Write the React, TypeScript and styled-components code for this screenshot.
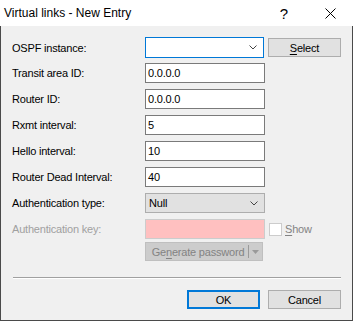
import styled, { createGlobalStyle } from 'styled-components';

const GlobalStyle = createGlobalStyle`
  html, body {
    margin: 0;
    padding: 0;
    background: #f0f0f0;
  }
  body {
    font-family: "Liberation Sans", Arial, sans-serif;
    font-size: 11px;
    letter-spacing: -0.2px;
    color: #000;
  }
`;

const Window = styled.div`
  width: 353px;
  height: 321px;
  box-sizing: border-box;
  border: 1px solid #4a4a4a;
  border-top: none;
  background: #f0f0f0;
  display: flex;
  flex-direction: column;
`;

const TitleBar = styled.div`
  height: 26px;
  flex: none;
  background: #fff;
  display: flex;
  align-items: center;
  margin: 0 -1px;
  padding-left: 4px;
  font-size: 12px;
  letter-spacing: 0;
`;

const TitleText = styled.div`
  flex: 1;
  padding-bottom: 1px;
`;

const TitleButton = styled.div<{ $w: number }>`
  width: ${(p) => p.$w}px;
  height: 26px;
  display: flex;
  align-items: center;
  justify-content: center;
  font-size: 15px;
`;

const Body = styled.div`
  flex: 1;
  display: flex;
  flex-direction: column;
  padding: 11px 11px 0 11px;
`;

const Row = styled.div<{ $h?: number; $mt?: number }>`
  display: flex;
  align-items: center;
  height: ${(p) => p.$h ?? 20}px;
  margin-top: ${(p) => p.$mt ?? 6}px;
  &:first-child {
    margin-top: 0;
  }
`;

const Label = styled.div<{ $disabled?: boolean }>`
  width: 133px;
  flex: none;
  color: ${(p) => (p.$disabled ? '#a0a0a0' : '#000')};
`;

const TextBox = styled.div<{ $bg?: string; $border?: string }>`
  width: 120px;
  height: 100%;
  box-sizing: border-box;
  border: 1px solid ${(p) => p.$border ?? '#7a7a7a'};
  background: ${(p) => p.$bg ?? '#fff'};
  display: flex;
  align-items: center;
  padding-left: 2px;
`;

const Combo = styled.div<{ $focused?: boolean }>`
  width: 120px;
  height: 100%;
  box-sizing: border-box;
  border: 1px solid ${(p) => (p.$focused ? '#0078d7' : '#adadad')};
  background: ${(p) => (p.$focused ? '#fff' : '#e1e1e1')};
  display: flex;
  align-items: center;
  padding: 0 6px 0 3px;
`;

const ComboValue = styled.div`
  flex: 1;
`;

const Button = styled.div<{ $w: number; $h?: number; $default?: boolean; $disabled?: boolean }>`
  width: ${(p) => p.$w}px;
  height: ${(p) => p.$h ?? 19}px;
  box-sizing: border-box;
  border: ${(p) => (p.$default ? '2px solid #0078d7' : `1px solid ${p.$disabled ? '#bfbfbf' : '#adadad'}`)};
  background: ${(p) => (p.$disabled ? '#cccccc' : '#e1e1e1')};
  color: ${(p) => (p.$disabled ? '#838383' : '#000')};
  display: flex;
  align-items: center;
  justify-content: center;
  white-space: nowrap;
  flex: none;
`;

const SplitMain = styled.div`
  flex: 1;
  text-align: center;
  padding-left: 2px;
`;

const SplitDivider = styled.div`
  width: 1px;
  height: 13px;
  background: #9a9a9a;
`;

const SplitArrow = styled.div`
  width: 13px;
  display: flex;
  justify-content: center;
`;

const Checkbox = styled.div`
  width: 13px;
  height: 13px;
  box-sizing: border-box;
  border: 1px solid #cccccc;
  background: #fff;
  margin-left: 4px;
`;

const CheckLabel = styled.div`
  margin-left: 3px;
  color: #838383;
`;

const Spacer = styled.div`
  width: 133px;
  flex: none;
`;

const Gap = styled.div`
  width: 4px;
  flex: none;
`;

const Separator = styled.div`
  margin: 16px 0 0 1px;
  height: 1px;
  background: #a0a0a0;
  border-bottom: 1px solid #fff;
`;

const Footer = styled.div`
  display: flex;
  justify-content: flex-end;
  gap: 8px;
  margin-top: 11px;
`;

const U = styled.span`
  text-decoration: underline;
  text-underline-offset: 2px;
`;

const Chevron = ({ color = '#444' }: { color?: string }) => (
  <svg width="8" height="5" viewBox="0 0 8 5">
    <path d="M0.5 0.5 L4 4 L7.5 0.5" fill="none" stroke={color} strokeWidth="1" />
  </svg>
);

const fields = [
  { label: 'Transit area ID:', value: '0.0.0.0' },
  { label: 'Router ID:', value: '0.0.0.0' },
  { label: 'Rxmt interval:', value: '5' },
  { label: 'Hello interval:', value: '10' },
  { label: 'Router Dead Interval:', value: '40' },
];

export default function App() {
  return (
    <>
      <GlobalStyle />
      <Window>
        <TitleBar>
          <TitleText>Virtual links - New Entry</TitleText>
          <TitleButton $w={46}>?</TitleButton>
          <TitleButton $w={46}>
            <svg width="11" height="11" viewBox="0 0 11 11">
              <path d="M0.5 0.5 L10.5 10.5 M10.5 0.5 L0.5 10.5" stroke="#000" strokeWidth="1" />
            </svg>
          </TitleButton>
        </TitleBar>
        <Body>
          <Row $h={21}>
            <Label>OSPF instance:</Label>
            <Combo $focused>
              <ComboValue />
              <Chevron />
            </Combo>
            <Gap />
            <Button $w={73}>
              <span>
                <U>S</U>elect
              </span>
            </Button>
          </Row>
          <Row $mt={5}>
            <Label>{fields[0].label}</Label>
            <TextBox>{fields[0].value}</TextBox>
          </Row>
          {fields.slice(1).map((f) => (
            <Row key={f.label}>
              <Label>{f.label}</Label>
              <TextBox>{f.value}</TextBox>
            </Row>
          ))}
          <Row>
            <Label>Authentication type:</Label>
            <Combo>
              <ComboValue>Null</ComboValue>
              <Chevron />
            </Combo>
          </Row>
          <Row>
            <Label $disabled>Authentication key:</Label>
            <TextBox $bg="#ffc0c0" $border="#cccccc" />
            <Checkbox />
            <CheckLabel>
              <U>S</U>how
            </CheckLabel>
          </Row>
          <Row $h={19} $mt={3}>
            <Spacer />
            <Button $w={118} $disabled>
              <SplitMain>
                Ge<U>n</U>erate password
              </SplitMain>
              <SplitDivider />
              <SplitArrow>
                <svg width="7" height="4" viewBox="0 0 7 4">
                  <path d="M0 0 L7 0 L3.5 4 Z" fill="#9a9a9a" />
                </svg>
              </SplitArrow>
            </Button>
          </Row>
          <Separator />
          <Footer>
            <Button $w={73} $default>
              OK
            </Button>
            <Button $w={73}>Cancel</Button>
          </Footer>
        </Body>
      </Window>
    </>
  );
}
